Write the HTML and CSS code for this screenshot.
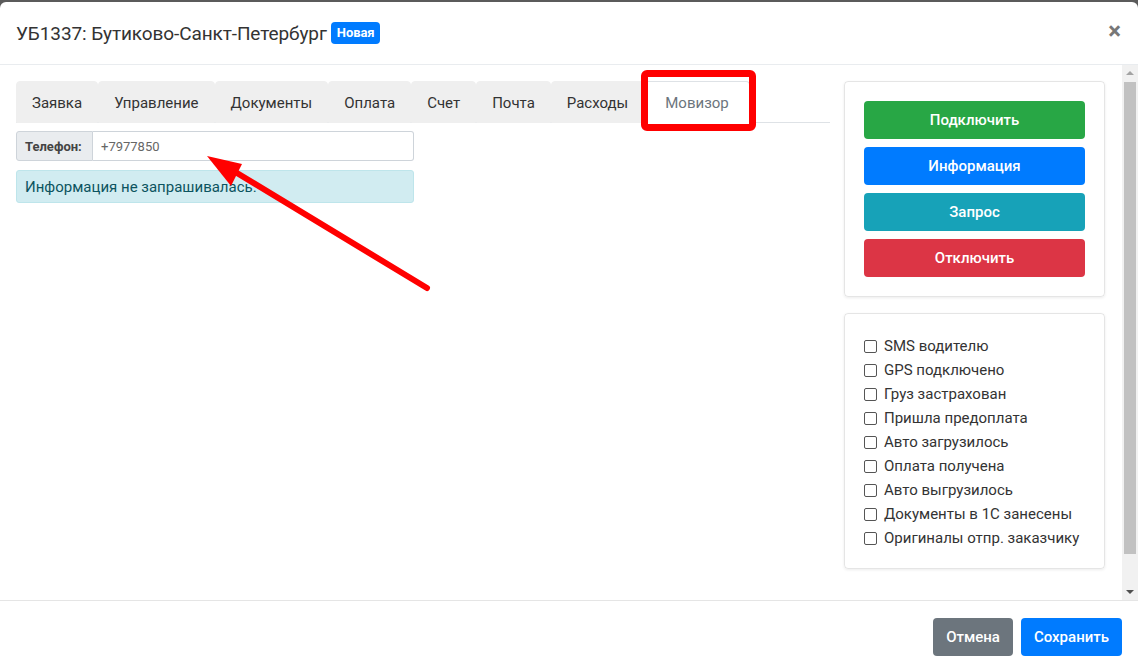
FILE: index.html
```html
<!DOCTYPE html>
<html lang="ru">
<head>
    <meta charset="UTF-8">
    <title>УБ1337</title>
    <link rel="stylesheet" href="styles.css">
</head>
<body>
    <div class="modal">
        <div class="modal-header">
            <h5 class="modal-title">УБ1337: Бутиково-Санкт-Петербург <span class="badge">Новая</span></h5>
            <span class="close">&times;</span>
        </div>

        <div class="modal-body">
            <div class="body-main">
                <div class="left-col">
                    <ul class="nav-tabs">
                        <li>Заявка</li>
                        <li>Управление</li>
                        <li>Документы</li>
                        <li>Оплата</li>
                        <li>Счет</li>
                        <li>Почта</li>
                        <li>Расходы</li>
                        <li class="active">Мовизор</li>
                    </ul>
                    <div class="input-group">
                        <span class="input-label">Телефон:</span>
                        <span class="input-field">+7977850</span>
                    </div>
                    <div class="alert">Информация не запрашивалась.</div>
                </div>

                <div class="right-col">
                    <div class="card">
                        <button class="btn btn-green">Подключить</button>
                        <button class="btn btn-blue">Информация</button>
                        <button class="btn btn-teal">Запрос</button>
                        <button class="btn btn-red">Отключить</button>
                    </div>
                    <div class="card checks">
                        <label><span class="box"></span>SMS водителю</label>
                        <label><span class="box"></span>GPS подключено</label>
                        <label><span class="box"></span>Груз застрахован</label>
                        <label><span class="box"></span>Пришла предоплата</label>
                        <label><span class="box"></span>Авто загрузилось</label>
                        <label><span class="box"></span>Оплата получена</label>
                        <label><span class="box"></span>Авто выгрузилось</label>
                        <label><span class="box"></span>Документы в 1С занесены</label>
                        <label><span class="box"></span>Оригиналы отпр. заказчику</label>
                    </div>
                </div>
            </div>

            <div class="scrollbar">
                <span class="arrow-up"></span>
                <span class="thumb"></span>
                <span class="arrow-down"></span>
            </div>
        </div>

        <div class="modal-footer">
            <button class="btn btn-gray">Отмена</button>
            <button class="btn btn-blue">Сохранить</button>
        </div>

        <!-- annotation drawn over the screenshot -->
        <div class="highlight"></div>
        <svg class="pointer" width="1138" height="669" viewBox="0 0 1138 669">
            <line x1="427" y1="288" x2="232" y2="170" stroke="#ff0000" stroke-width="6" stroke-linecap="round"/>
            <polygon points="207,156 242,164 231,186" fill="#ff0000"/>
        </svg>
    </div>
</body>
</html>
```

FILE: styles.css
```css
* {
    box-sizing: border-box;
}

body {
    margin: 0;
    background: #5b5b5b;
    font-family: Roboto, "Noto Sans", sans-serif;
    color: #333;
    height: 669px;
    overflow: hidden;
}

.modal {
    position: relative;
    margin-top: 2px;
    height: 667px;
    background: #fff;
    border-radius: 6px 6px 0 0;
    display: flex;
    flex-direction: column;
}

.modal-header {
    height: 63px;
    border-bottom: 1px solid #e9ecef;
    display: flex;
    align-items: center;
    justify-content: space-between;
    padding: 0 16px;
}

.modal-title {
    margin: 0;
    font-size: 19px;
    font-weight: 400;
    color: #333;
    display: flex;
    align-items: center;
    gap: 4px;
    letter-spacing: -0.1px;
}

.badge {
    background: #007bff;
    color: #fff;
    font-size: 13px;
    font-weight: 700;
    padding: 3px 6px;
    border-radius: 4px;
    line-height: 16px;
}

.close {
    font-size: 24px;
    font-weight: 700;
    color: #777;
    margin-right: 1px;
    margin-top: -4px;
}

.modal-body {
    flex: 1;
    display: flex;
    border-bottom: 1px solid #e5e5e5;
}

.body-main {
    flex: 1;
    display: grid;
    grid-template-columns: 814px 261px;
    column-gap: 14px;
    align-items: start;
    padding: 16px 17px 16px 16px;
}

.nav-tabs {
    list-style: none;
    margin: 0;
    padding: 0;
    display: flex;
    border-bottom: 1px solid #dee2e6;
}

.nav-tabs li {
    height: 42px;
    line-height: 42px;
    padding: 0 15px;
    font-size: 15px;
    color: #333;
    background: #efefef;
    border-radius: 4px 4px 0 0;
    margin-bottom: -1px;
    border: 1px solid #efefef;
}

.nav-tabs li.active {
    background: #fff;
    color: #6c757d;
    border-color: #dee2e6 #dee2e6 #fff;
    padding: 0 20px;
}

.input-group {
    display: flex;
    width: 398px;
    height: 30px;
    margin-top: 8px;
    font-size: 13px;
}

.input-label {
    width: 77px;
    background: #e9ecef;
    border: 1px solid #ced4da;
    border-radius: 3px 0 0 3px;
    font-weight: 700;
    color: #444;
    display: flex;
    align-items: center;
    padding-left: 8px;
}

.input-field {
    flex: 1;
    border: 1px solid #ced4da;
    border-left: none;
    border-radius: 0 3px 3px 0;
    color: #666;
    display: flex;
    align-items: center;
    padding-left: 8px;
}

.alert {
    width: 398px;
    margin-top: 9px;
    height: 33px;
    background: #d1ecf1;
    border: 1px solid #bee5eb;
    border-radius: 3px;
    color: #0c5460;
    font-size: 15px;
    display: flex;
    align-items: center;
    padding-left: 8px;
}

.right-col {
    display: flex;
    flex-direction: column;
    gap: 16px;
}

.card {
    border: 1px solid rgba(0, 0, 0, 0.1);
    border-radius: 4px;
    box-shadow: 0 1px 3px rgba(0, 0, 0, 0.08);
    padding: 19px 19px;
    display: flex;
    flex-direction: column;
    gap: 8px;
}

.btn {
    border: none;
    border-radius: 4px;
    height: 38px;
    font-family: inherit;
    font-size: 15px;
    font-weight: 500;
    color: #fff;
    padding: 0 12px;
}

.btn-green { background: #28a745; }
.btn-blue { background: #007bff; }
.btn-teal { background: #17a2b8; }
.btn-red { background: #dc3545; }
.btn-gray { background: #6c757d; }

.checks {
    padding: 20px 19px 18px;
    gap: 0;
}

.checks label {
    height: 24px;
    display: flex;
    align-items: center;
    font-size: 15px;
    color: #333;
}

.box {
    width: 13px;
    height: 13px;
    border: 1px solid #555;
    border-radius: 2px;
    margin-right: 7px;
    background: #fff;
}

.scrollbar {
    width: 16px;
    background: #f1f1f1;
    display: flex;
    flex-direction: column;
    align-items: center;
    padding: 6px 0;
}

.arrow-up,
.arrow-down {
    width: 0;
    height: 0;
    border-left: 4px solid transparent;
    border-right: 4px solid transparent;
}

.arrow-up {
    border-bottom: 4px solid #a3a3a3;
}

.arrow-down {
    border-top: 4px solid #505050;
}

.thumb {
    width: 12px;
    flex: 1;
    background: #c1c1c1;
    margin: 7px 0 36px;
}

.modal-footer {
    height: 68px;
    display: flex;
    justify-content: flex-end;
    align-items: center;
    gap: 8px;
    padding: 4px 16px 0;
}

.modal-footer .btn {
    padding: 0 13px;
}

.highlight {
    position: absolute;
    left: 641px;
    top: 68px;
    width: 115px;
    height: 61px;
    border: 7px solid #ff0000;
    border-radius: 6px;
}

.pointer {
    position: absolute;
    left: 0;
    top: -2px;
    pointer-events: none;
}
```
